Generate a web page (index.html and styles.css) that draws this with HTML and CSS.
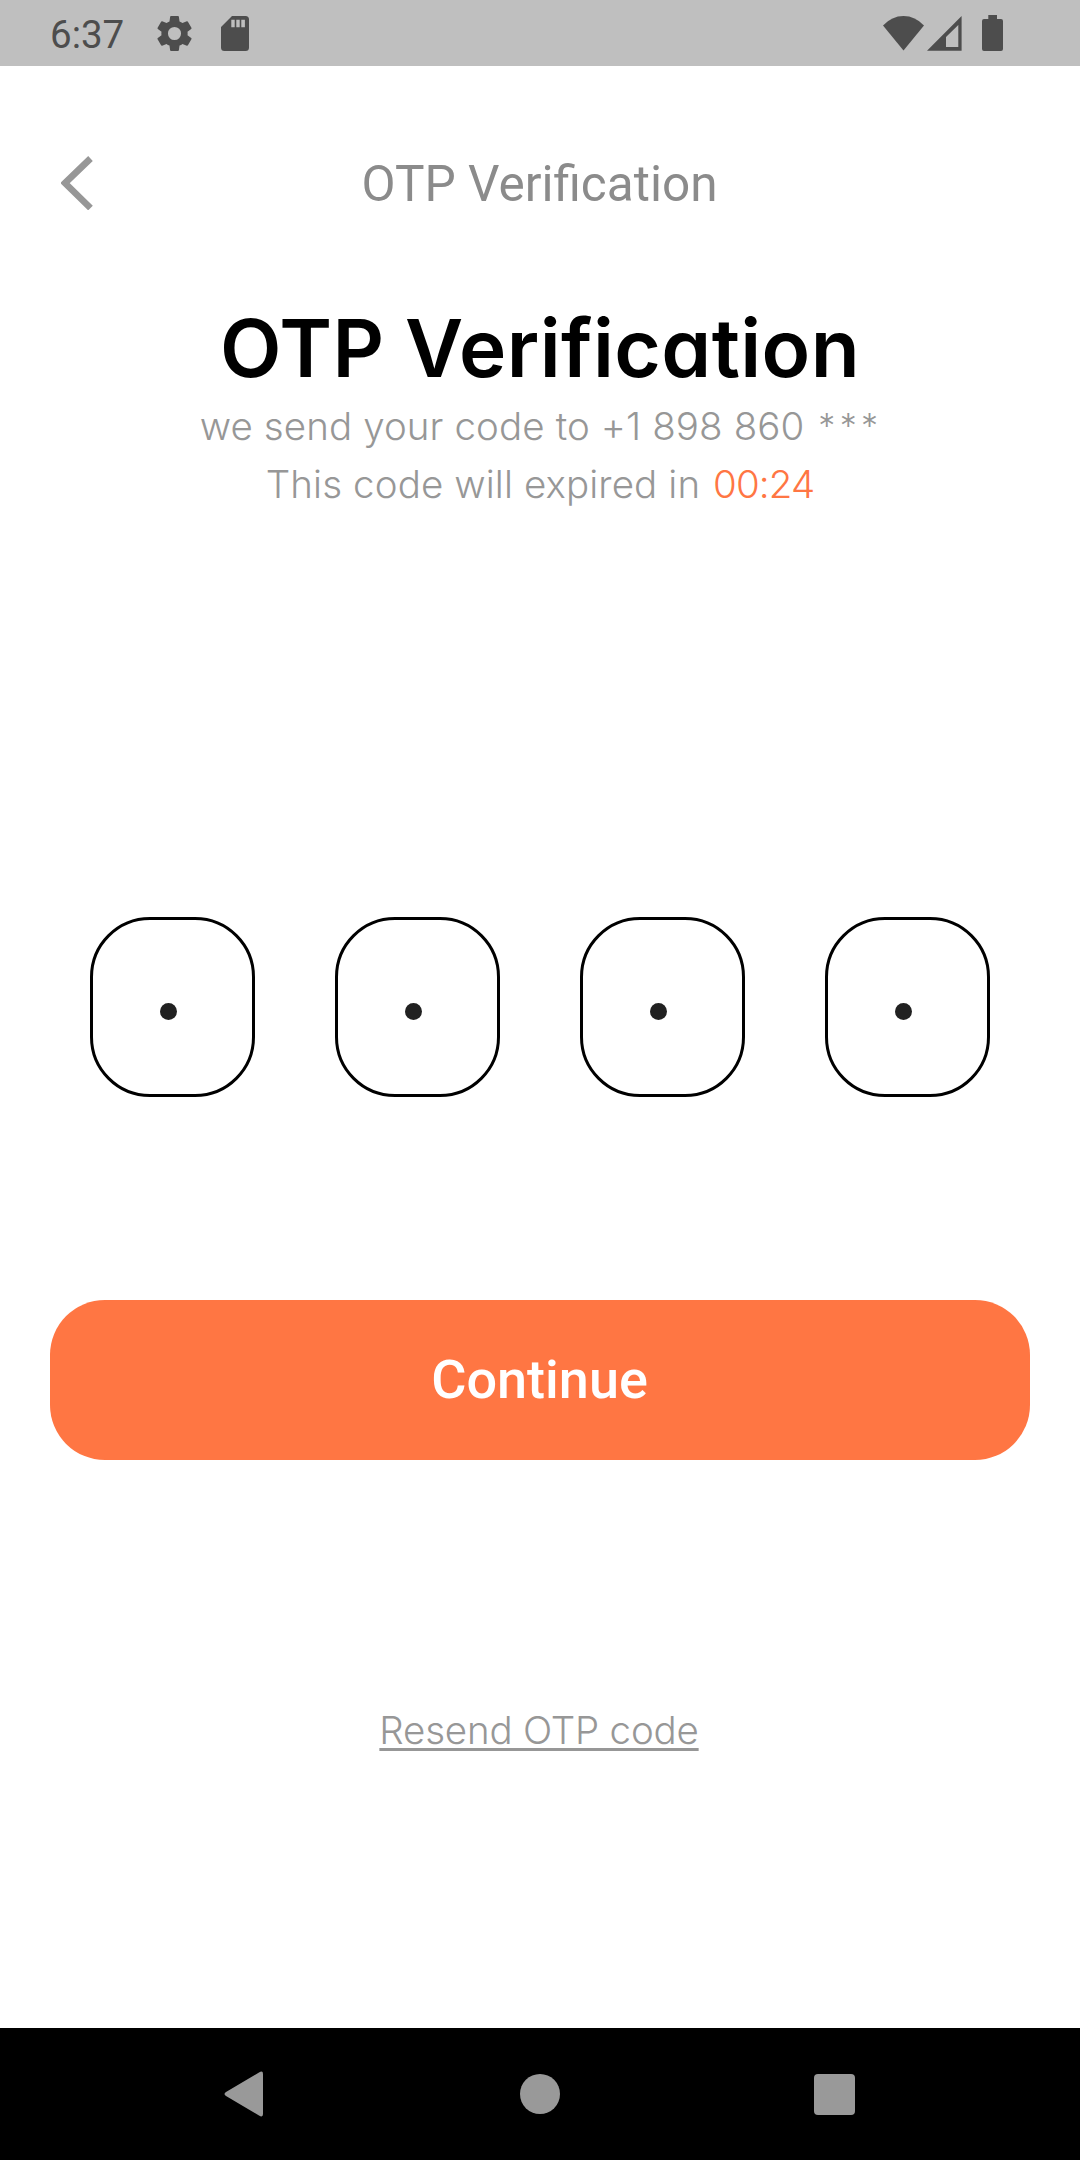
FILE: index.html
```html
<!DOCTYPE html>
<html lang="en">
<head>
<meta charset="utf-8">
<title>OTP Verification</title>
<link rel="stylesheet" href="styles.css">
</head>
<body>
<div class="screen">
  <div class="status">
    <span class="time">6:37</span>
    <svg class="gear" viewBox="2.4 2.4 19.200 19.200" width="35" height="35"><path d="M19.14 12.94c.04-.3.06-.61.06-.94 0-.32-.02-.64-.07-.94l2.03-1.58a.49.49 0 0 0 .12-.61l-1.92-3.32a.49.49 0 0 0-.59-.22l-2.39.96c-.5-.38-1.03-.7-1.62-.94L14.4 2.81a.48.48 0 0 0-.48-.41h-3.84a.47.47 0 0 0-.47.41L9.25 5.35c-.59.24-1.13.57-1.62.94l-2.39-.96a.49.49 0 0 0-.59.22L2.74 8.87a.47.47 0 0 0 .12.61l2.03 1.58c-.05.3-.09.63-.09.94s.02.64.07.94l-2.03 1.58a.49.49 0 0 0-.12.61l1.92 3.32c.12.22.37.29.59.22l2.39-.96c.5.38 1.03.7 1.62.94l.36 2.54c.05.24.24.41.48.41h3.84c.24 0 .44-.17.47-.41l.36-2.54c.59-.24 1.13-.56 1.62-.94l2.39.96c.22.08.47 0 .59-.22l1.92-3.32a.47.47 0 0 0-.12-.61l-2.01-1.58zM12 15.6A3.6 3.6 0 1 1 12 8.4a3.6 3.6 0 0 1 0 7.2z"/></svg>
    <svg class="card" viewBox="0 0 28 35" width="28" height="35"><path fill-rule="evenodd" d="M11 0h13.500a3.500 3.500 0 0 1 3.500 3.500v28a3.500 3.500 0 0 1-3.500 3.500H3.500A3.500 3.500 0 0 1 0 31.500V11zM10.300 3.700v7.500h3.400V3.700zm5 0v7.500h3.400V3.700zm5 0v7.500h3.600V3.700z"/></svg>
    <span class="grow"></span>
    <svg viewBox="0 0 41 35" width="41" height="35"><path d="M0 9.500Q8.800 0 20.500 0T41 9.500L20.500 34.500z"/></svg>
    <svg class="signal" viewBox="0 0 35 35" width="35" height="35"><path fill-rule="evenodd" d="M0 34.700 34.600 0v34.700zM19 31h12.300V9L19 21z"/></svg>
    <svg class="battery" viewBox="0 0 21 36" width="21" height="36"><path d="M6.300 0h8.700v4h4a2 2 0 0 1 2 2v28a2 2 0 0 1-2 2H2a2 2 0 0 1-2-2V6a2 2 0 0 1 2-2h4.300z"/></svg>
  </div>
  <div class="header">
    <svg class="back" viewBox="0 0 32 54" width="32" height="54"><path d="M29.500 2.500 4 27l25.500 25" fill="none" stroke="#979797" stroke-width="6.600"/></svg>
    <span class="title">OTP Verification</span>
  </div>
  <h1 class="heading">OTP Verification</h1>
  <p class="line sent">we send your code to +1 898 860 <span class="mask">***</span></p>
  <p class="line expiry">This code will expired in <span class="timer">00:24</span></p>
  <div class="otp">
    <div class="digit"><i class="dot"></i></div>
    <div class="digit"><i class="dot"></i></div>
    <div class="digit"><i class="dot"></i></div>
    <div class="digit"><i class="dot"></i></div>
  </div>
  <button class="continue">Continue</button>
  <a class="resend">Resend OTP code</a>
  <div class="nav">
    <svg viewBox="0 0 39 46" width="39" height="46"><path d="M2 21 35 1.500Q39-1 39 3v40q0 4-4 1.500L2 25q-3-2 0-4z"/></svg>
    <svg class="home" viewBox="0 0 40 40" width="40" height="40"><circle cx="20" cy="20" r="20"/></svg>
    <svg viewBox="0 0 41 41" width="41" height="41"><rect width="41" height="41" rx="4"/></svg>
  </div>
</div>
</body>
</html>
```
FILE: styles.css
```css
* { box-sizing: border-box; }
body { margin: 0; background: #fff; }
.screen { display: flex; flex-direction: column; width: 1080px; height: 2160px; font-family: Roboto, sans-serif; }
.status { display: flex; align-items: center; height: 66px; padding: 0 77px 0 50px; background: #bfbfbf; color: #4d4d4d; fill: #4d4d4d; }
.status svg { display: block; }
.time { width: 107px; padding-top: 3px; font-size: 38.5px; line-height: 60px; }
.card { margin-left: 29px; }
.grow { flex: 1; }
.signal { margin-left: 3px; }
.battery { margin-left: 20px; }
.header { display: grid; grid-template-columns: 100px 1fr 100px; align-items: center; height: 234px; padding: 0 61px; }
.title { padding: 2px 1px 0 0; font-size: 49.5px; line-height: 60px; text-align: center; color: #8b8b8b; }
.heading { margin: 0; font: 600 80px/96px Inter, sans-serif; font-feature-settings: "cv11"; letter-spacing: .4px; text-align: center; color: #000; }
.line { margin: 0; height: 58.3px; font: 300 38.5px/60px Inter, sans-serif; letter-spacing: .1px; text-align: center; color: #979797; }
.mask { font-size: 34px; line-height: 1; letter-spacing: 4.3px; vertical-align: 2px; margin: 0 -4px 0 3px; }
.sent { padding-right: 2px; }
.timer { margin-left: 2px; letter-spacing: -.9px; color: #ff7643; }
.otp { display: flex; justify-content: space-between; margin: 404.5px 90px 0; }
.digit { display: flex; align-items: center; justify-content: center; width: 165px; height: 180px; padding: 8px 9px 0 0; border: 3px solid #000; border-radius: 60px; }
.dot { width: 17px; height: 17px; border-radius: 50%; background: #212121; }
.continue { height: 160px; margin: 203px 50px 0; padding: 0 1px 0 0; border: 0; border-radius: 55px; background: #ff7643; color: #fff; font: 500 54px/62px Roboto, sans-serif; }
.resend { align-self: center; margin: 240px 2px 0 0; font: 300 38.5px/60px Inter, sans-serif; letter-spacing: -.2px; color: #979797; text-decoration: underline; text-decoration-thickness: 2.5px; text-underline-offset: 4px; }
.nav { display: flex; align-items: center; justify-content: space-between; height: 132px; margin-top: auto; padding: 0 225px 0 224px; background: #000; fill: #999; }
.home { margin-left: 2px; }
```
